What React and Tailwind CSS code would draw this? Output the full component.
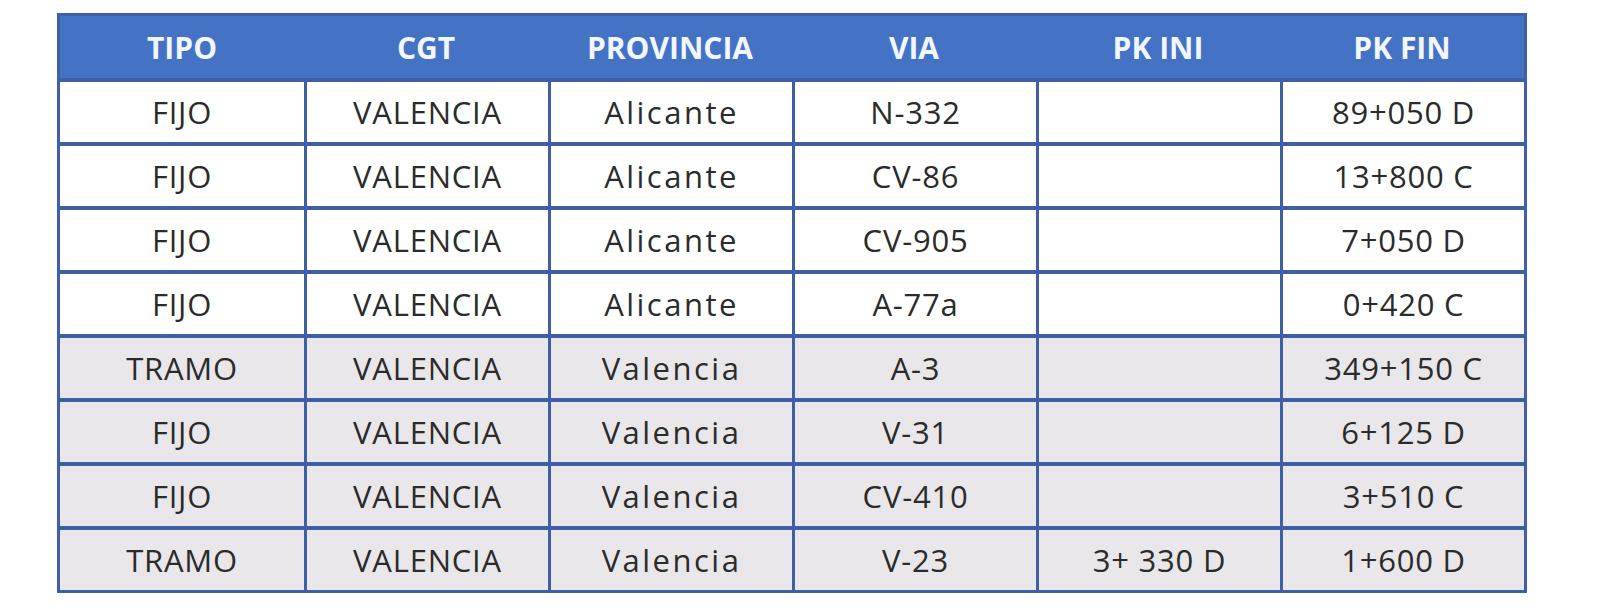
import React from 'react';

const headers = ['TIPO', 'CGT', 'PROVINCIA', 'VIA', 'PK INI', 'PK FIN'];

const rows = [
  { tipo: 'FIJO', cgt: 'VALENCIA', prov: 'Alicante', via: 'N-332', ini: '', fin: '89+050 D', grey: false },
  { tipo: 'FIJO', cgt: 'VALENCIA', prov: 'Alicante', via: 'CV-86', ini: '', fin: '13+800 C', grey: false },
  { tipo: 'FIJO', cgt: 'VALENCIA', prov: 'Alicante', via: 'CV-905', ini: '', fin: '7+050 D', grey: false },
  { tipo: 'FIJO', cgt: 'VALENCIA', prov: 'Alicante', via: 'A-77a', ini: '', fin: '0+420 C', grey: false },
  { tipo: 'TRAMO', cgt: 'VALENCIA', prov: 'Valencia', via: 'A-3', ini: '', fin: '349+150 C', grey: true },
  { tipo: 'FIJO', cgt: 'VALENCIA', prov: 'Valencia', via: 'V-31', ini: '', fin: '6+125 D', grey: true },
  { tipo: 'FIJO', cgt: 'VALENCIA', prov: 'Valencia', via: 'CV-410', ini: '', fin: '3+510 C', grey: true },
  { tipo: 'TRAMO', cgt: 'VALENCIA', prov: 'Valencia', via: 'V-23', ini: '3+ 330 D', fin: '1+600 D', grey: true },
];

export default function App() {
  return (
    <div className="w-[1600px] h-[609px] bg-white pt-[13px] pl-[57px]" style={{ fontFamily: '"Open Sans", "Liberation Sans", sans-serif' }}>
      <div className="w-[1470px] border-[3px] border-[#3f5ea8]">
        {/* header */}
        <div className="grid grid-cols-6 h-[62px] bg-[#4472c4]">
          {headers.map((h) => (
            <div key={h} className="flex items-center justify-center text-[#f2f6ff] font-bold text-[30px]">
              {h}
            </div>
          ))}
        </div>

        {/* body */}
        {rows.map((r, i) => (
          <div
            key={i}
            className={`grid grid-cols-6 h-[64px] border-t-[4px] border-[#3f5ea8] ${r.grey ? 'bg-[#e9e7ea]' : 'bg-white'}`}
          >
            {[r.tipo, r.cgt, r.prov, r.via, r.ini, r.fin].map((c, j) => (
              <div
                key={j}
                className={`flex items-center justify-center text-[31px] text-[#2b2b2b] ${j > 0 ? 'border-l-[3px] border-[#3f5ea8]' : ''} ${j === 2 ? 'tracking-[0.08em]' : 'tracking-wide'}`}
              >
                {c}
              </div>
            ))}
          </div>
        ))}
      </div>
    </div>
  );
}
